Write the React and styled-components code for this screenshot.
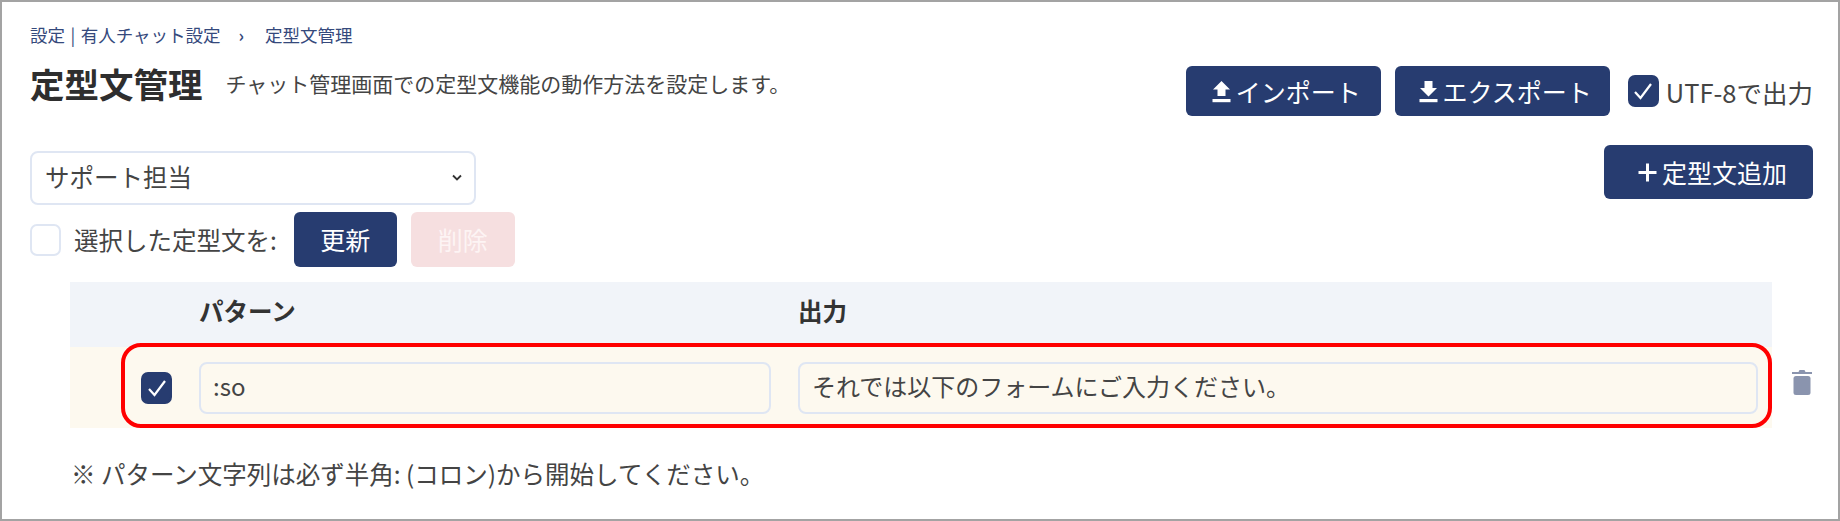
import React from "react";
import styled, { createGlobalStyle } from "styled-components";

const navy = "#273c70";
const line = "#dfe6f3";
const textColor = "#3a3a3a";

const GlobalStyle = createGlobalStyle`
  html, body {
    margin: 0;
    background: #fff;
  }
  * {
    box-sizing: border-box;
  }
  body {
    font-family: "Noto Sans CJK JP", "Noto Sans", sans-serif;
    color: ${textColor};
  }
`;

const Frame = styled.div`
  width: 1840px;
  height: 521px;
  padding: 21px 25px 0 28px;
  border: 2px solid #a3a3a3;
  background: #fff;
  overflow: hidden;
`;

const Breadcrumb = styled.nav`
  display: flex;
  align-items: center;
  height: 22px;
  font-size: 17.5px;
  color: #35497c;

  span.bar {
    margin: 0 5.5px;
  }

  span.sep {
    margin: 0 21px 0 18px;
    font-weight: 700;
    font-size: 17px;
  }
`;

const TitleRow = styled.div`
  display: flex;
  justify-content: space-between;
  align-items: flex-start;
  margin-top: 21px;
`;

const TitleGroup = styled.div`
  display: flex;
  align-items: center;
  height: 34px;
`;

const Title = styled.h1`
  margin: 0 23px 0 0;
  font-size: 34.5px;
  font-weight: 700;
  line-height: 36px;
  color: #2e2e2e;
`;

const Lead = styled.p`
  margin: 0;
  font-size: 21px;
  line-height: 28px;
  color: #444;
  white-space: nowrap;
`;

const Actions = styled.div`
  display: flex;
  align-items: center;
`;

const Button = styled.button`
  display: inline-flex;
  align-items: center;
  justify-content: center;
  gap: 5px;
  width: ${(p) => p.$w}px;
  height: ${(p) => p.$h}px;
  margin-left: ${(p) => p.$ml || 0}px;
  padding: 0 0 0 ${(p) => p.$pl || 0}px;
  border: 0;
  border-radius: 6px;
  background: ${(p) => (p.$disabled ? "#f6dfe0" : navy)};
  color: ${(p) => (p.$disabled ? "#fdf4f4" : "#fff")};
  font-family: inherit;
  font-size: 25px;
  line-height: 1;
`;

const Box = styled.span`
  display: inline-flex;
  align-items: center;
  justify-content: center;
  flex: none;
  width: 31px;
  height: 32px;
  border-radius: 7px;
  border: 2px solid ${(p) => (p.$checked ? navy : line)};
  background: ${(p) => (p.$checked ? navy : "#fff")};
`;

const Utf = styled.label`
  display: flex;
  align-items: center;
  margin-left: 11px;
  font-size: 25.5px;
  color: #444;

  span {
    margin-left: 7px;
    white-space: nowrap;
  }
`;

const ToolRow = styled.div`
  display: flex;
  justify-content: space-between;
  align-items: flex-start;
  margin-top: 29px;
`;

const ToolLeft = styled.div`
  padding-top: 6px;
`;

const SelectWrap = styled.div`
  position: relative;
  width: 446px;
  height: 54px;

  svg {
    position: absolute;
    right: 14px;
    top: 23px;
  }
`;

const Select = styled.select`
  appearance: none;
  width: 100%;
  height: 100%;
  padding: 0 13px 3px;
  border: 2px solid ${line};
  border-radius: 8px;
  background: #fff;
  font-family: inherit;
  font-size: 24.5px;
  color: #444;
`;

const BulkRow = styled.div`
  display: flex;
  align-items: center;
  margin-top: 7px;
  height: 55px;
`;

const BulkLabel = styled.span`
  margin: 0 17px 0 13px;
  font-size: 24.5px;
  color: #444;
  white-space: nowrap;
`;

const Table = styled.div`
  margin: 15px 0 0 40px;
`;

const HeadRow = styled.div`
  display: grid;
  grid-template-columns: 102px 572px 1fr;
  column-gap: 27px;
  width: 1702px;
  height: 65px;
  padding-right: 14px;
  background: #f1f4f9;
  font-size: 24.5px;
  font-weight: 700;
  line-height: 58px;
  color: #333;
`;

const RowLine = styled.div`
  display: flex;
  align-items: center;
`;

const DataRow = styled.div`
  position: relative;
  display: grid;
  grid-template-columns: 102px 572px 1fr;
  column-gap: 27px;
  align-items: center;
  width: 1702px;
  height: 81px;
  padding: 0 14px 0 0;
  background: #fdf9ef;
`;

const CheckCell = styled.div`
  display: flex;
  justify-content: flex-end;
`;

const TextInput = styled.input`
  width: 100%;
  height: 52px;
  padding: 0 12px 5px;
  border: 2px solid ${line};
  border-radius: 8px;
  background: #fdf9ef;
  font-family: inherit;
  font-size: 24px;
  color: #444;
  outline: none;
`;

const Highlight = styled.div`
  position: absolute;
  left: 51px;
  right: 0;
  top: -4px;
  bottom: 0;
  border: 4px solid #ff0000;
  border-radius: 20px;
  pointer-events: none;
`;

const TrashButton = styled.div`
  display: flex;
  margin: -12px 0 0 20px;
`;

const Note = styled.p`
  margin: 31px 0 0 41px;
  font-size: 24.5px;
  line-height: 30px;
  color: #444;
`;

const CheckMark = () => (
  <svg width="20" height="18" viewBox="0 0 20 18" fill="none">
    <path d="M2 10l5.5 6L18 2" stroke="#fff" strokeWidth="2.2" />
  </svg>
);

const UploadIcon = () => (
  <svg width="19" height="23" viewBox="0 0 19 23" fill="#fff">
    <path d="M9.5 1L18 9.5h-4.5V16h-8V9.5H1z" />
    <rect x="0.5" y="19" width="18" height="3.2" />
  </svg>
);

const DownloadIcon = () => (
  <svg width="19" height="23" viewBox="0 0 19 23" fill="#fff">
    <path d="M9.5 16.5L1 8h4.5V1h8v7H18z" />
    <rect x="0.5" y="19" width="18" height="3.2" />
  </svg>
);

const PlusIcon = () => (
  <svg width="19" height="19" viewBox="0 0 19 19" fill="#fff">
    <rect x="8" y="0.5" width="3" height="18" />
    <rect x="0.5" y="8" width="18" height="3" />
  </svg>
);

const Chevron = () => (
  <svg width="10" height="8" viewBox="0 0 10 8" fill="none">
    <path d="M1 1.5l4 4 4-4" stroke="#333" strokeWidth="1.8" />
  </svg>
);

const TrashIcon = () => (
  <svg width="20" height="26" viewBox="0 0 20 26" fill="#8a94ae">
    <path d="M0 3h6.5l1-2h5l1 2H20v2H0z" />
    <rect x="1.5" y="7" width="17" height="19" rx="2.5" />
  </svg>
);

export default function App() {
  return (
    <>
      <GlobalStyle />
      <Frame>
        <Breadcrumb>
          設定
          <span className="bar">|</span>
          有人チャット設定
          <span className="sep">›</span>
          定型文管理
        </Breadcrumb>
        <TitleRow>
          <TitleGroup>
            <Title>定型文管理</Title>
            <Lead>チャット管理画面での定型文機能の動作方法を設定します。</Lead>
          </TitleGroup>
          <Actions>
            <Button $w={195} $h={50} $pl={6}>
              <UploadIcon />
              インポート
            </Button>
            <Button $w={215} $h={50} $ml={14} $pl={6}>
              <DownloadIcon />
              エクスポート
            </Button>
            <Utf>
              <Box $checked>
                <CheckMark />
              </Box>
              <span>UTF-8で出力</span>
            </Utf>
          </Actions>
        </TitleRow>
        <ToolRow>
          <ToolLeft>
            <SelectWrap>
              <Select defaultValue="support">
                <option value="support">サポート担当</option>
              </Select>
              <Chevron />
            </SelectWrap>
            <BulkRow>
              <Box />
              <BulkLabel>選択した定型文を:</BulkLabel>
              <Button $w={103} $h={55}>更新</Button>
              <Button $w={104} $h={55} $ml={14} $disabled>削除</Button>
            </BulkRow>
          </ToolLeft>
          <Button $w={209} $h={54} $pl={8}>
            <PlusIcon />
            定型文追加
          </Button>
        </ToolRow>
        <Table>
          <HeadRow>
            <div />
            <div>パターン</div>
            <div>出力</div>
          </HeadRow>
          <RowLine>
            <DataRow>
              <CheckCell>
                <Box $checked>
                  <CheckMark />
                </Box>
              </CheckCell>
              <TextInput readOnly value=":so" />
              <TextInput readOnly value="それでは以下のフォームにご入力ください。" />
              <Highlight />
            </DataRow>
            <TrashButton>
              <TrashIcon />
            </TrashButton>
          </RowLine>
        </Table>
        <Note>※ パターン文字列は必ず半角: (コロン)から開始してください。</Note>
      </Frame>
    </>
  );
}
